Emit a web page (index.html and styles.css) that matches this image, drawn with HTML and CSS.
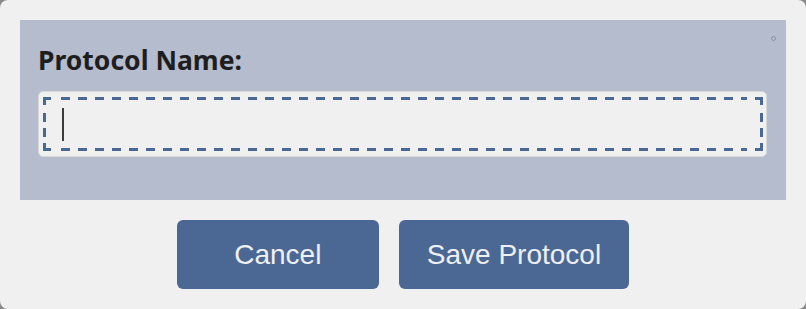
FILE: index.html
```html
<!DOCTYPE html>
<html lang="en">
<head>
<meta charset="utf-8">
<title>Protocol Name</title>
<link rel="stylesheet" href="styles.css">
</head>
<body>
<div class="dialog">
  <div class="panel">
    <span class="handle"></span>
    <label class="label" for="pname">Protocol Name:</label>
    <div class="field">
      <div class="focus">
        <svg class="ring" width="720" height="54" viewBox="0 0 720 54" aria-hidden="true">
          <path d="M1.5 8 V1.5 H8" />
          <path d="M712 1.5 H718.5 V8" />
          <path d="M718.5 46 V52.5 H712" />
          <path d="M8 52.5 H1.5 V46" />
          <path class="dash" d="M18 1.5 H704" />
          <path class="dash" d="M18 52.5 H704" />
          <path class="dash-v" d="M1.5 16 V40" />
          <path class="dash-v" d="M718.5 16 V40" />
        </svg>
        <span class="caret"></span>
      </div>
    </div>
  </div>
  <div class="actions">
    <button class="btn">Cancel</button>
    <button class="btn">Save Protocol</button>
  </div>
</div>
</body>
</html>
```

FILE: styles.css
```css
html, body {
  margin: 0;
  padding: 0;
  background: #8a8a8a;
}
.dialog {
  box-sizing: border-box;
  width: 806px;
  height: 309px;
  background: #f0f0f0;
  border-radius: 8px;
  padding: 20px;
}
.panel {
  position: relative;
  box-sizing: border-box;
  height: 180px;
  background: #b4bccd;
  padding: 22px 19px 0 18px;
  display: flex;
  flex-direction: column;
}
.handle {
  position: absolute;
  top: 16px;
  right: 10px;
  width: 3px;
  height: 3px;
  border: 1px solid #8890a8;
  border-radius: 50%;
}
.label {
  font-family: "Noto Sans", "Open Sans", sans-serif;
  font-weight: 700;
  font-size: 26.5px;
  line-height: 36px;
  color: #1e1e1e;
}
.field {
  margin-top: 13px;
  box-sizing: border-box;
  height: 66px;
  border: 1px solid #d6d6d6;
  border-radius: 5px;
  background: #f0f0f0;
  padding: 5px 4px;
}
.focus {
  position: relative;
  box-sizing: border-box;
  height: 54px;
  display: flex;
  align-items: center;
  padding-left: 19px;
}
.ring {
  position: absolute;
  left: 0;
  top: 0;
  fill: none;
  stroke: #4a6896;
  stroke-width: 3;
}
.ring .dash {
  stroke-dasharray: 9 8;
}
.ring .dash-v {
  stroke-dasharray: 9 6;
}
.caret {
  display: block;
  width: 2px;
  height: 33px;
  background: #3c3c3c;
}
.actions {
  display: flex;
  justify-content: center;
  gap: 20px;
  margin-top: 20px;
}
.btn {
  box-sizing: border-box;
  min-width: 202px;
  height: 69px;
  padding: 0 28px;
  border: none;
  border-radius: 6px;
  background: #4b6894;
  color: #eef0f3;
  font-family: "Liberation Sans", Arial, sans-serif;
  font-size: 28px;
}
```
